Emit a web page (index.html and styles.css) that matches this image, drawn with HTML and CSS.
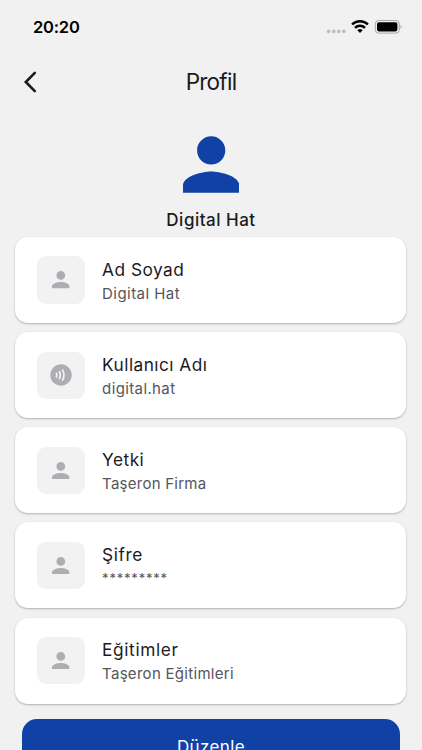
FILE: index.html
```
<!DOCTYPE html>
<html lang="tr">
<head>
<meta charset="utf-8">
<title>Profil</title>
<link rel="stylesheet" href="styles.css">
</head>
<body>
<svg class="defs" aria-hidden="true">
  <symbol id="person" viewBox="4 4 16 16">
    <path d="M12 12c2.21 0 4-1.79 4-4s-1.79-4-4-4-4 1.79-4 4 1.79 4 4 4zm0 2c-2.67 0-8 1.34-8 4v2h16v-2c0-2.66-5.33-4-8-4z"/>
  </symbol>
</svg>
<div class="screen">
  <header class="status">
    <span class="time">20:20</span>
    <svg class="indicators" width="76" height="16" viewBox="0 0 76 16">
      <g fill="#bcbcbe"><circle cx="2.6" cy="12.4" r="1.8"/><circle cx="7.7" cy="12.4" r="1.8"/><circle cx="12.8" cy="12.4" r="1.8"/><circle cx="17.8" cy="12.4" r="1.8"/></g>
      <g fill="none" stroke="#000" stroke-width="2.5"><path d="M26.1 5.5a11 11 0 0 1 15.8 0"/><path d="M29 8.9a7 7 0 0 1 10 0"/></g>
      <path d="M34 14l-2.6-2.7a3.7 3.7 0 0 1 5.2 0z"/>
      <rect x="49.3" y="1.5" width="24" height="12.6" rx="3.4" fill="none" stroke="#a7a7a9"/>
      <rect x="51" y="3.2" width="20.4" height="9.2" rx="1.8"/>
      <path d="M74.5 5.9a2.2 2.2 0 0 1 0 3.8z" fill="#a0a0a2"/>
    </svg>
  </header>
  <nav class="bar">
    <svg class="back" width="14" height="22" viewBox="0 0 14 22"><path d="M11.8 1.9 2.8 11l9 9.1" fill="none" stroke="#1b1b1f" stroke-width="2.6" stroke-linecap="round"/></svg>
    <h1>Profil</h1>
  </nav>
  <main>
    <section class="profile">
      <svg class="avatar"><use href="#person"/></svg>
      <h2>Digital Hat</h2>
    </section>
    <div class="cards">
      <article class="card">
        <span class="tile"><svg class="person"><use href="#person"/></svg></span>
        <div class="info"><h3 class="t-name">Ad Soyad</h3><p class="s-name">Digital Hat</p></div>
      </article>
      <article class="card">
        <span class="tile"><svg class="signal" viewBox="0 0 22 22"><circle cx="11" cy="11" r="10.7"/><g fill="none" stroke="#f2f2f3" stroke-width="1.7" stroke-linecap="round"><path d="M6.4 9.2q.9 1.8 0 3.8M9.4 7.6q1.8 3.4 0 6.9M12.6 6.1q2.7 4.8 0 9.9"/></g></svg></span>
        <div class="info"><h3 class="t-user">Kullanıcı Adı</h3><p class="s-user">digital.hat</p></div>
      </article>
      <article class="card">
        <span class="tile"><svg class="person"><use href="#person"/></svg></span>
        <div class="info"><h3 class="t-role">Yetki</h3><p class="s-role">Taşeron Firma</p></div>
      </article>
      <article class="card">
        <span class="tile"><svg class="person"><use href="#person"/></svg></span>
        <div class="info"><h3 class="t-pass">Şifre</h3><p class="s-pass">*********</p></div>
      </article>
      <article class="card">
        <span class="tile"><svg class="person"><use href="#person"/></svg></span>
        <div class="info"><h3 class="t-edu">Eğitimler</h3><p class="s-edu">Taşeron Eğitimleri</p></div>
      </article>
    </div>
    <button class="edit">Düzenle</button>
  </main>
</div>
</body>
</html>
```
FILE: styles.css
```
* { box-sizing: border-box; margin: 0; padding: 0; }
body { background: #f1f1f1; color: #1b1b1f; font-family: Inter, "Liberation Sans", sans-serif; overflow: hidden; }
.defs { display: none; }
.screen { width: 422px; height: 750px; overflow: hidden; }
.status { display: flex; justify-content: space-between; align-items: center; height: 54px; padding: 0 20px 0 33px; }
.time { margin-top: -1px; font-size: 16.5px; font-weight: 600; color: #000; letter-spacing: -0.2px; }
.indicators { display: block; margin-top: -1px; }
.bar { display: grid; grid-template-columns: 24px 1fr 24px; align-items: center; height: 56px; padding: 0 23px; }
.back { margin-top: -1px; }
.bar h1 { margin-top: -2px; text-align: center; font-size: 22.5px; font-weight: 400; letter-spacing: -0.75px; }
.profile { display: flex; flex-direction: column; align-items: center; padding-top: 26px; }
.avatar { width: 56.4px; height: 57px; fill: #1042a6; }
.profile h2 { margin-top: 15px; height: 25px; line-height: 24px; font-size: 17px; font-weight: 500; letter-spacing: 0.5px; }
.cards { display: grid; gap: 9.1px; margin: 4.2px 15.6px 0 15.4px; }
.card { display: flex; align-items: center; height: 86px; padding-left: 21.6px; border-radius: 13px; background: #fff; box-shadow: 0 1px 2px rgba(0, 0, 0, 0.22), 0 1px 3px rgba(0, 0, 0, 0.06); }
.tile { display: grid; place-items: center; width: 47.6px; height: 47.5px; border-radius: 9px; background: #f2f2f3; }
.person { width: 17.6px; height: 17.6px; fill: #aeaeb2; }
.signal { width: 22px; height: 22px; fill: #aeaeb2; }
.info { margin-left: 17.5px; padding-top: 1.2px; }
.info h3 { height: 23.8px; line-height: 24px; font-size: 17.3px; font-weight: 400; letter-spacing: 0.48px; }
.info p { height: 22px; line-height: 23px; font-size: 15px; letter-spacing: 0.38px; color: #55555c; }
.info .t-user { letter-spacing: 0.46px; }
.info .t-edu { letter-spacing: 0.62px; }
.info .t-pass { letter-spacing: 0.55px; }
.info .s-name { letter-spacing: 0.45px; }
.info .s-role { letter-spacing: 0.25px; }
.info .s-edu { letter-spacing: 0.29px; }
.info .s-pass { line-height: 22px; font-size: 13px; letter-spacing: 0.8px; }
.edit { display: block; width: 378px; height: 52px; margin: 15px auto 0; border: 0; border-radius: 15px; background: #1042a6; color: #fff; font: 400 17px/56px Inter, sans-serif; letter-spacing: 0.4px; }
```
